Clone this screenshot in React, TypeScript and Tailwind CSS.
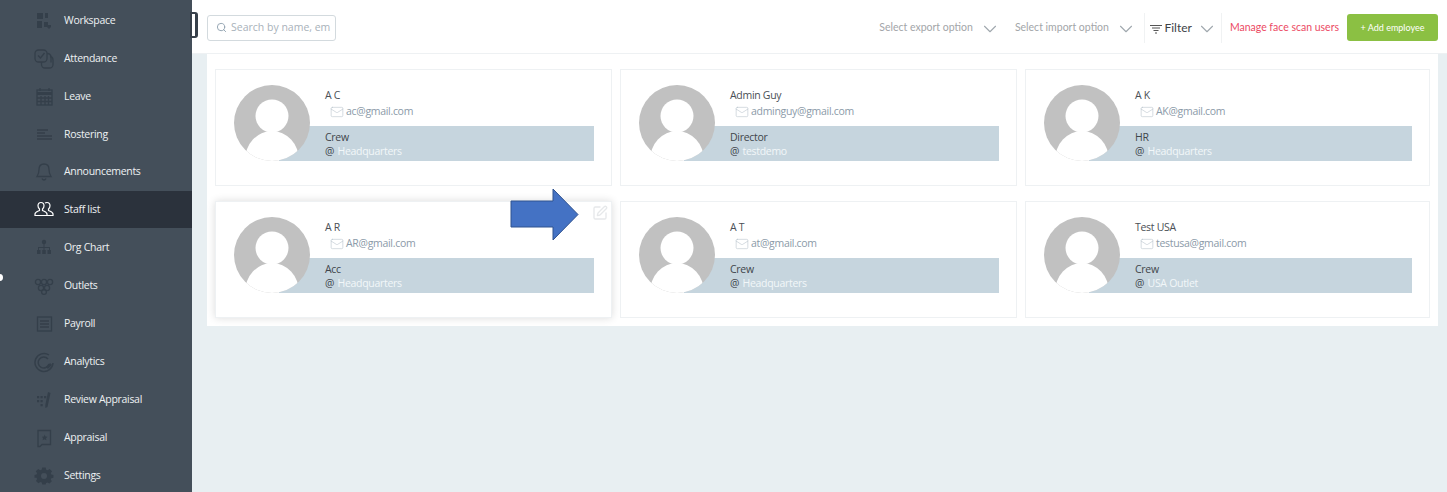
import React from 'react';
import { Search, ChevronDown, Mail, SquarePen } from 'lucide-react';

const iconClass = 'w-[22px] h-[22px] text-[#343f4a]';

const NavIcon: React.FC<{ name: string; active?: boolean }> = ({ name, active }) => {
  const common = {
    viewBox: '0 0 22 22',
    fill: 'none',
    stroke: 'currentColor',
    strokeWidth: 1.3,
    className: active ? 'w-[22px] h-[22px] text-white' : iconClass,
  };
  switch (name) {
    case 'Workspace':
      return (
        <svg {...common}>
          <path d="M4 3h6v6H4zM12 3h3v5h-3zM4 11h5v7H4z" fill="currentColor" stroke="none" />
          <path d="M11 12h4v3h3v2l-2 2-2-2h-3z" fill="currentColor" stroke="none" />
        </svg>
      );
    case 'Attendance':
      return (
        <svg {...common}>
          <rect x="2" y="2" width="12" height="12" rx="3.500" />
          <path d="M14 5.500h.5A3.500 3.500 0 0 1 18 9v5.500" />
          <path d="M17 8.500a3.500 3.500 0 0 1 3 3.500v4.500a3.500 3.500 0 0 1-3.500 3.500H12a3.500 3.500 0 0 1-3.500-3.500V14" />
          <path d="M5 7.500l2.500 2.500 4-5" />
        </svg>
      );
    case 'Leave':
      return (
        <svg {...common}>
          <rect x="4" y="4" width="15" height="15" />
          <path d="M4 7.500h15" strokeWidth="3" />
          <path d="M7 2v3M16 2v3M4 12h15M4 15.500h15M8 10v9M12 10v9M15.500 10v9" />
        </svg>
      );
    case 'Rostering':
      return (
        <svg {...common}>
          <path d="M4 7h11M4 10h8M4 13h15M4 16h15" strokeWidth="1.6" />
        </svg>
      );
    case 'Announcements':
      return (
        <svg {...common}>
          <path d="M11 3c-3.500 0-5 2.500-5 5.500 0 3.500-1 5.500-2 7h14c-1-1.500-2-3.500-2-7C16 5.500 14.500 3 11 3z" />
          <path d="M9 17.500c.5 1 1.200 1.500 2 1.500s1.500-.5 2-1.500" />
        </svg>
      );
    case 'Staff list':
      return (
        <svg {...common} strokeWidth={1.2}>
          <path d="M8 3.500c-2 0-3 1.500-3 3.200 0 1.500.7 2.600 1.500 3.300v1.500c-1.500.8-4.500 1.500-4.500 3.500v1.500h12v-1.500c0-2-3-2.700-4.500-3.500V10c.8-.7 1.500-1.800 1.500-3.300 0-1.700-1-3.200-3-3.200z" />
          <path d="M12 4c.5-.4 1.200-.5 2-.5 2 0 3 1.500 3 3.200 0 1.500-.7 2.600-1.500 3.300v1.500c1.500.8 4.500 1.500 4.500 3.500v1.500h-6" />
        </svg>
      );
    case 'Org Chart':
      return (
        <svg {...common} fill="currentColor" stroke="none">
          <circle cx="11" cy="5" r="2.200" />
          <rect x="4" y="13" width="3.500" height="4" />
          <rect x="9.250" y="13" width="3.500" height="4" />
          <rect x="14.500" y="13" width="3.500" height="4" />
          <path d="M10.500 7h1v3h5.500v3h-1v-2H11.500v2h-1v-2H6v2H5v-3h5.500z" />
        </svg>
      );
    case 'Outlets':
      return (
        <svg {...common}>
          <circle cx="5" cy="7" r="2.600" />
          <circle cx="11" cy="7" r="2.600" />
          <circle cx="17" cy="7" r="2.600" />
          <circle cx="8" cy="13" r="2.600" />
          <circle cx="14" cy="13" r="2.600" />
          <circle cx="11" cy="17" r="2.400" />
        </svg>
      );
    case 'Payroll':
      return (
        <svg {...common}>
          <rect x="4.500" y="4" width="14" height="14" />
          <path d="M7 8h9M7 11h9M7 14h9" />
        </svg>
      );
    case 'Analytics':
      return (
        <svg {...common} strokeWidth={1.5}>
          <path d="M16 4a9 9 0 1 0 4 8" />
          <path d="M15 8a5.500 5.500 0 1 0 1 5" />
          <path d="M14 17l4-4" strokeWidth="2.500" />
        </svg>
      );
    case 'Review Appraisal':
      return (
        <svg {...common} fill="currentColor" stroke="none">
          <path d="M4 7h2.200v2.200H4zM7.500 7h2.200v2.200H7.500zM11 7h2.200v2.200H11zM4 11h2.200v2.200H4zM7.500 11h2.200v2.200H7.500zM7.500 15h2.200v2.200H7.500z" />
          <path d="M15 3l2.500 1-3 14-2.200 1 0-3z" />
        </svg>
      );
    case 'Appraisal':
      return (
        <svg {...common}>
          <path d="M5 3.500h12.500v14H9l-2 2H5z" />
          <path d="M11.500 7.500l1 2 2 .3-1.500 1.400.4 2-1.900-1-1.900 1 .4-2L9 9.800l2-.3z" fill="currentColor" stroke="none" />
        </svg>
      );
    default:
      return (
        <svg {...common} fill="currentColor" stroke="none">
          <path fillRule="evenodd" d="M9 2h4l.6 2.700 1.700.7 2.300-1.500 2.800 2.800-1.500 2.300.7 1.700L22 11.300v3.400l-2.400.6-.7 1.700 1.300 2.200-2.800 2.800-2.300-1.500-1.700.7L13 23H9l-.5-2.300-1.700-.7-2.300 1.500-2.800-2.800L3 16.400l-.7-1.700L0 14.700v-3.400l2.300-.6.700-1.700-1.500-2.300 2.800-2.800 2.300 1.500 1.700-.7z" transform="translate(1.500 1) scale(.86 .8)" />
          <circle cx="11" cy="11" r="3" fill="#444f5a" />
        </svg>
      );
  }
};

const NAV = [
  'Workspace',
  'Attendance',
  'Leave',
  'Rostering',
  'Announcements',
  'Staff list',
  'Org Chart',
  'Outlets',
  'Payroll',
  'Analytics',
  'Review Appraisal',
  'Appraisal',
  'Settings',
];

const STAFF = [
  { name: 'A C', email: 'ac@gmail.com', role: 'Crew', place: 'Headquarters' },
  { name: 'Admin Guy', email: 'adminguy@gmail.com', role: 'Director', place: 'testdemo' },
  { name: 'A K', email: 'AK@gmail.com', role: 'HR', place: 'Headquarters' },
  { name: 'A R', email: 'AR@gmail.com', role: 'Acc', place: 'Headquarters', hover: true },
  { name: 'A T', email: 'at@gmail.com', role: 'Crew', place: 'Headquarters' },
  { name: 'Test USA', email: 'testusa@gmail.com', role: 'Crew', place: 'USA Outlet' },
];

const Avatar = () => (
  <svg viewBox="0 0 76 76" className="w-[76px] h-[76px] shrink-0 relative z-10">
    <defs>
      <clipPath id="avatar-clip">
        <circle cx="38" cy="38" r="38" />
      </clipPath>
    </defs>
    <circle cx="38" cy="38" r="38" fill="#c1c1c1" />
    <circle cx="38" cy="31" r="16.500" fill="#fff" />
    <ellipse cx="38" cy="75" rx="27" ry="29" fill="#fff" clipPath="url(#avatar-clip)" />
  </svg>
);

const StaffCard: React.FC<(typeof STAFF)[number]> = ({ name, email, role, place, hover }) => (
  <div
    className={`relative h-[117px] bg-white border border-[#eef1f3] pl-[18px] pt-[15px] pr-[17px] flex ${
      hover ? 'shadow-[0_0_8px_rgba(0,0,0,0.14)]' : ''
    }`}
  >
    <Avatar />
    <div className="flex-1 min-w-0 -ml-[31px] flex flex-col">
      <div className="pl-[46px] h-[41px] pt-[3px] text-[#4a4f55] leading-[15px]">
        <div>{name}</div>
        <div className="flex items-center text-[#8b9aa8] mt-[1px]">
          <Mail size={14} strokeWidth={1} className="ml-[5px] mr-[2px] text-[#b9c3cb]" />
          {email}
        </div>
      </div>
      <div className="h-[35px] bg-[#c6d5de] pl-[46px] pt-[4px] leading-[14px] text-[#3f454b]">
        <div>{role}</div>
        <div>
          @ <span className="ml-px text-[#f2f7f9]">{place}</span>
        </div>
      </div>
    </div>
    {hover && (
      <SquarePen size={16} strokeWidth={2} className="absolute right-[3px] top-[3px] text-[#e6e8ea]" />
    )}
  </div>
);

const Dropdown: React.FC<{ label: string; className?: string }> = ({ label, className }) => (
  <div className={`flex items-center text-[#a3a6a9] ${className ?? ''}`}>
    <span>{label}</span>
    <ChevronDown size={22} strokeWidth={1.2} className="ml-[6.500px] mt-[3px] text-[#a0a8ae]" />
  </div>
);

export default function App() {
  return (
    <div className="relative flex h-[492px] w-[1447px] overflow-hidden bg-[#e8eff2] font-['Open_Sans',sans-serif] text-[10.5px] tracking-[-0.3px]">
      <nav className="w-[192px] shrink-0 bg-[#444f5a] pt-px">
        {NAV.map((item) => {
          const active = item === 'Staff list';
          return (
            <div
              key={item}
              className={`flex h-[37.920px] items-center pl-[33px] pt-[1.500px] gap-[9px] text-[#eef1f3] ${
                active ? 'bg-[#2b323c]' : ''
              }`}
            >
              <NavIcon name={item} active={active} />
              <span>{item}</span>
            </div>
          );
        })}
      </nav>

      <div className="flex-1 min-w-0">
        <header className="flex h-[54px] items-center bg-white border-b border-[#eef1f3] pl-[15px] pr-[9px] pt-[2px] font-['Lato',sans-serif] text-[10.5px] tracking-normal">
          <div className="flex h-[26px] w-[129px] items-center overflow-hidden rounded-[3px] border border-[#d3dade] pl-2 font-['Open_Sans',sans-serif] text-[10.5px] text-[#a9b2ba]">
            <Search size={11} className="mr-[4px] shrink-0 text-[#8ea0ae]" />
            <span className="whitespace-nowrap">Search by name, em</span>
          </div>
          <div className="ml-auto flex items-center h-[38px]">
            <Dropdown label="Select export option" />
            <Dropdown label="Select import option" className="ml-[13.500px]" />
            <div className="ml-[7px] flex h-[30px] items-center border-x border-[#f0f2f3] pl-[5px] pr-[2.500px]">
              <svg viewBox="0 0 12 10" className="w-[12px] h-[10px] text-[#555] mr-[2px] mt-[2px]" fill="none" stroke="currentColor" strokeWidth="1.1">
                <path d="M0 1.500h12M2 4h8M3.500 6.500h5M5 9h2" />
              </svg>
              <span className="text-[12px] text-[#3e4348]">Filter</span>
              <ChevronDown size={22} strokeWidth={1.2} className="ml-[4.500px] mt-[3px] text-[#a0a8ae]" />
            </div>
            <span className="ml-[8px] text-[#ec4a64]">Manage face scan users</span>
            <button className="ml-[8px] h-[27px] w-[91px] rounded-[3px] bg-[#8bc043] text-[9px] text-white">
              + Add employee
            </button>
          </div>
        </header>

        <main className="ml-[15px] mr-[9px] bg-white pt-[15px] pb-[8px] pl-[8px] pr-[8px]">
          <div className="grid grid-cols-[397px_397px_405px] gap-x-[8px] gap-y-[15px]">
            {STAFF.map((person) => (
              <StaffCard key={person.name} {...person} />
            ))}
          </div>
        </main>
      </div>

      {/* sidebar toggle sticking out over the header */}
      <div className="absolute left-[190px] top-[12px] h-[26px] w-[8px] rounded-r-[3px] border-2 border-r-[3px] border-[#37404a] bg-white" />
      <div className="absolute left-[-4px] top-[274px] h-[7px] w-[7px] rounded-full bg-white" />

      {/* callout arrow pasted over the screenshot */}
      <svg viewBox="0 0 69 53" className="absolute left-[510px] top-[188px] w-[69px] h-[53px]">
        <path d="M1 13h42V1l25 25.500L43 52V39H1z" fill="#4472c4" stroke="#2f528f" strokeWidth="1" />
      </svg>
    </div>
  );
}
